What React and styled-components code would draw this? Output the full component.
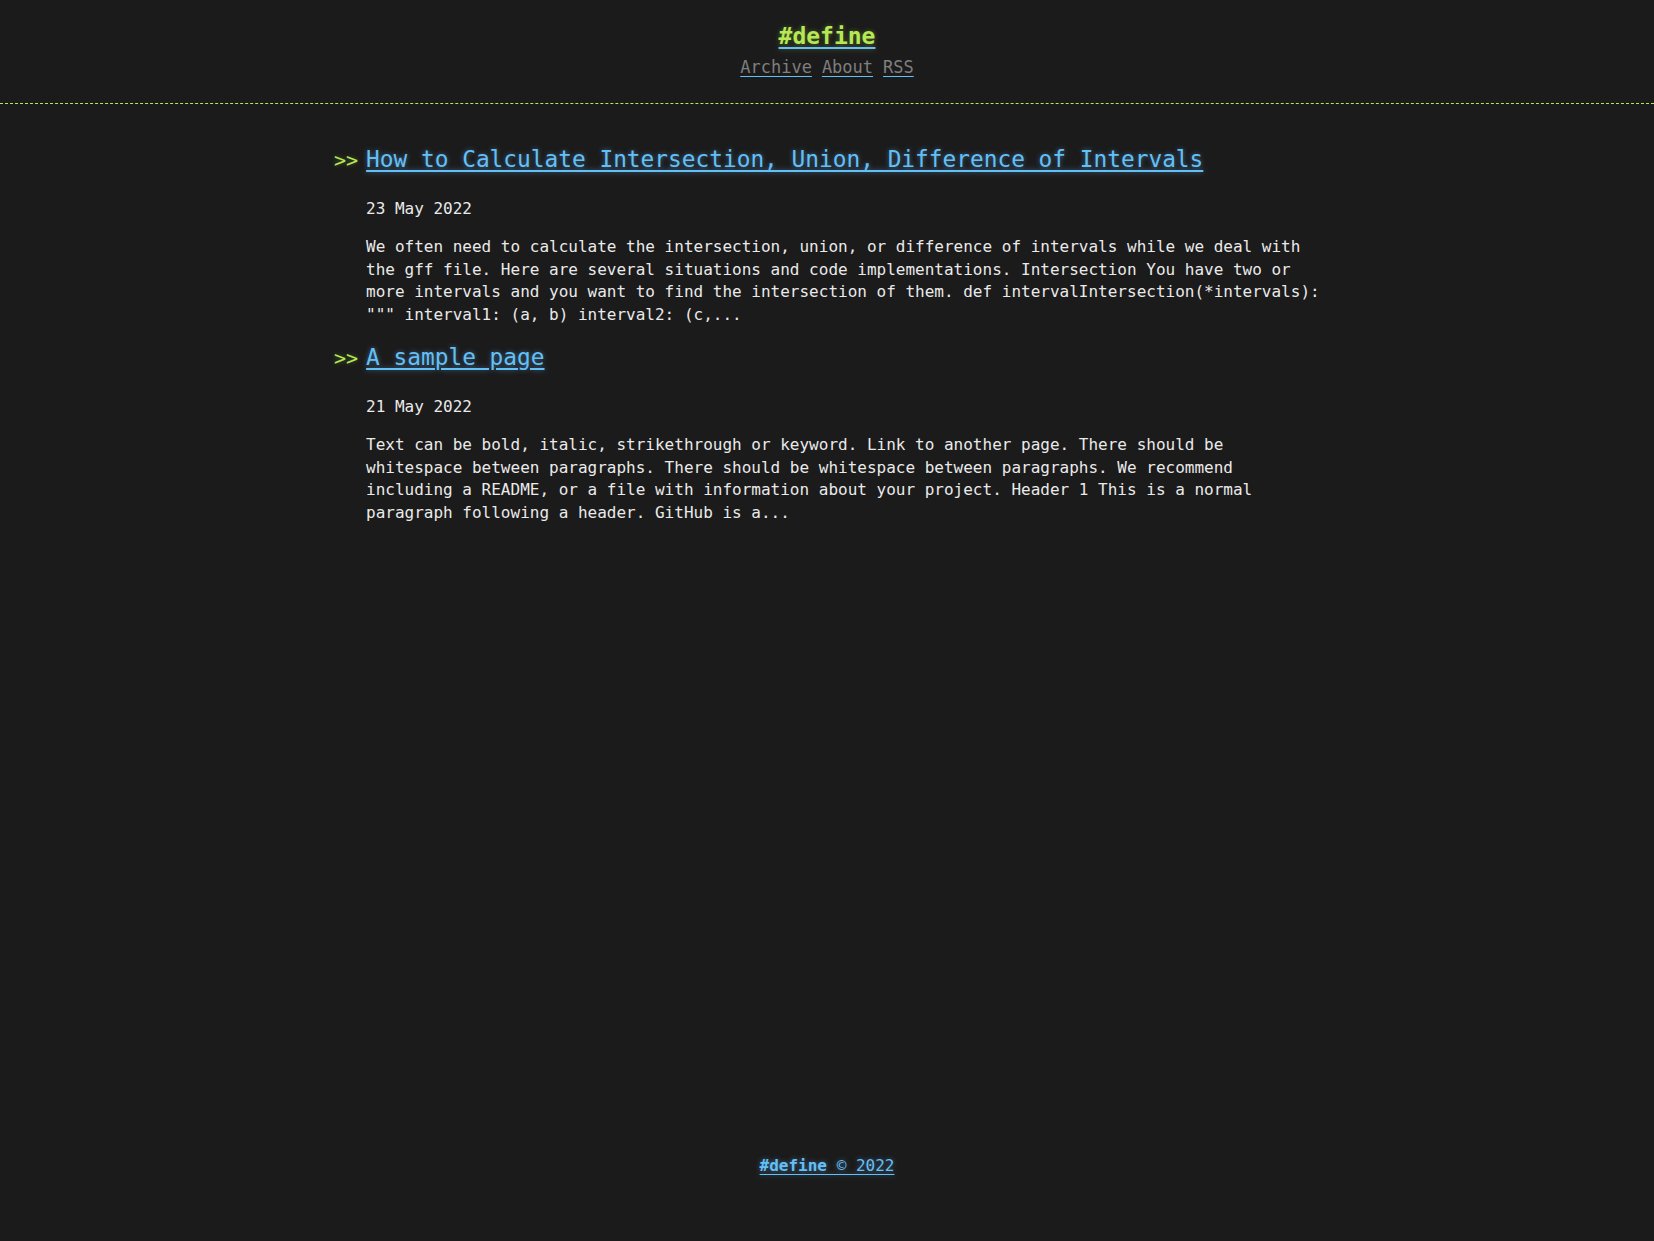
import React from "react";
import styled, { createGlobalStyle } from "styled-components";

const posts = [
  {
    id: 1,
    title: "How to Calculate Intersection, Union, Difference of Intervals",
    date: "23 May 2022",
    excerpt:
      'We often need to calculate the intersection, union, or difference of intervals while we deal with the gff file. Here are several situations and code implementations. Intersection You have two or more intervals and you want to find the intersection of them. def intervalIntersection(*intervals): """ interval1: (a, b) interval2: (c,...',
  },
  {
    id: 2,
    title: "A sample page",
    date: "21 May 2022",
    excerpt:
      "Text can be bold, italic, strikethrough or keyword. Link to another page. There should be whitespace between paragraphs. There should be whitespace between paragraphs. We recommend including a README, or a file with information about your project. Header 1 This is a normal paragraph following a header. GitHub is a...",
  },
];

const GlobalStyle = createGlobalStyle`
  html, body {
    margin: 0;
    padding: 0;
    background: #1b1b1b;
  }
  body {
    color: #eaeaea;
    font-family: "DejaVu Sans Mono", "Liberation Mono", monospace;
    font-size: 16px;
  }
`;

const App = () => {
  return (
    <>
      <GlobalStyle />
      <Page>
        <Header>
          <SiteTitle href="#">#define</SiteTitle>
          <Nav>
            <NavLink href="#">Archive</NavLink>
            <NavLink href="#">About</NavLink>
            <NavLink href="#">RSS</NavLink>
          </Nav>
        </Header>
        <Main>
          {posts.map(({ id, title, date, excerpt }) => (
            <Post key={id}>
              <PostTitle>
                <Prefix>&gt;&gt;</Prefix>
                <TitleLink href="#">{title}</TitleLink>
              </PostTitle>
              <PostBody>
                <Date>{date}</Date>
                <Excerpt>{excerpt}</Excerpt>
              </PostBody>
            </Post>
          ))}
        </Main>
        <Footer>
          <FooterLink href="#">
            <strong>#define</strong> © 2022
          </FooterLink>
        </Footer>
      </Page>
    </>
  );
};

export default App;

const Page = styled.div`
  min-height: 100vh;
  display: flex;
  flex-direction: column;
`;

const Header = styled.header`
  display: flex;
  flex-direction: column;
  align-items: center;
  padding: 22px 0 25px;
  border-bottom: 1px dashed #b5e853;
`;

const SiteTitle = styled.a`
  font-size: 23px;
  line-height: 28px;
  font-weight: 700;
  color: #b5e853;
  text-decoration: underline;
  text-decoration-color: #63c0f5;
  text-decoration-thickness: 2px;
  text-underline-offset: 3px;
  text-shadow: 0 0 5px rgba(181, 232, 83, 0.35);
`;

const Nav = styled.nav`
  display: flex;
  gap: 10px;
  margin-top: 6px;
`;

const NavLink = styled.a`
  font-size: 17px;
  line-height: 22px;
  color: #7f7f7f;
  text-decoration: underline;
  text-decoration-color: #63c0f5;
  text-underline-offset: 3px;
`;

const Main = styled.main`
  width: 1000px;
  margin: 0 auto;
  padding: 40px 0 0 14px;
  display: flex;
  flex-direction: column;
  gap: 16px;
`;

const Post = styled.article`
  display: flex;
  flex-direction: column;
`;

const PostTitle = styled.h2`
  display: flex;
  align-items: baseline;
  gap: 8px;
  margin: 0;
  font-weight: 400;
  line-height: 30px;
`;

const Prefix = styled.span`
  font-size: 20px;
  color: #b5e853;
  text-shadow: 0 0 5px rgba(181, 232, 83, 0.3);
`;

const TitleLink = styled.a`
  font-size: 22.8px;
  color: #63c0f5;
  text-decoration: underline;
  text-underline-offset: 3px;
  text-shadow: 0 0 5px rgba(104, 182, 255, 0.5);
`;

const PostBody = styled.div`
  margin-left: 32px;
  margin-top: 23px;
  max-width: 958px;
`;

const Date = styled.div`
  line-height: 22.4px;
  margin-bottom: 16px;
`;

const Excerpt = styled.p`
  margin: 0;
  line-height: 22.4px;
`;

const Footer = styled.footer`
  margin-top: auto;
  display: flex;
  justify-content: center;
  padding-bottom: 64px;
`;

const FooterLink = styled.a`
  line-height: 22px;
  color: #63c0f5;
  text-decoration: underline;
  text-underline-offset: 3px;
  text-shadow: 0 0 5px rgba(104, 182, 255, 0.5);

  strong {
    font-weight: 700;
  }
`;
